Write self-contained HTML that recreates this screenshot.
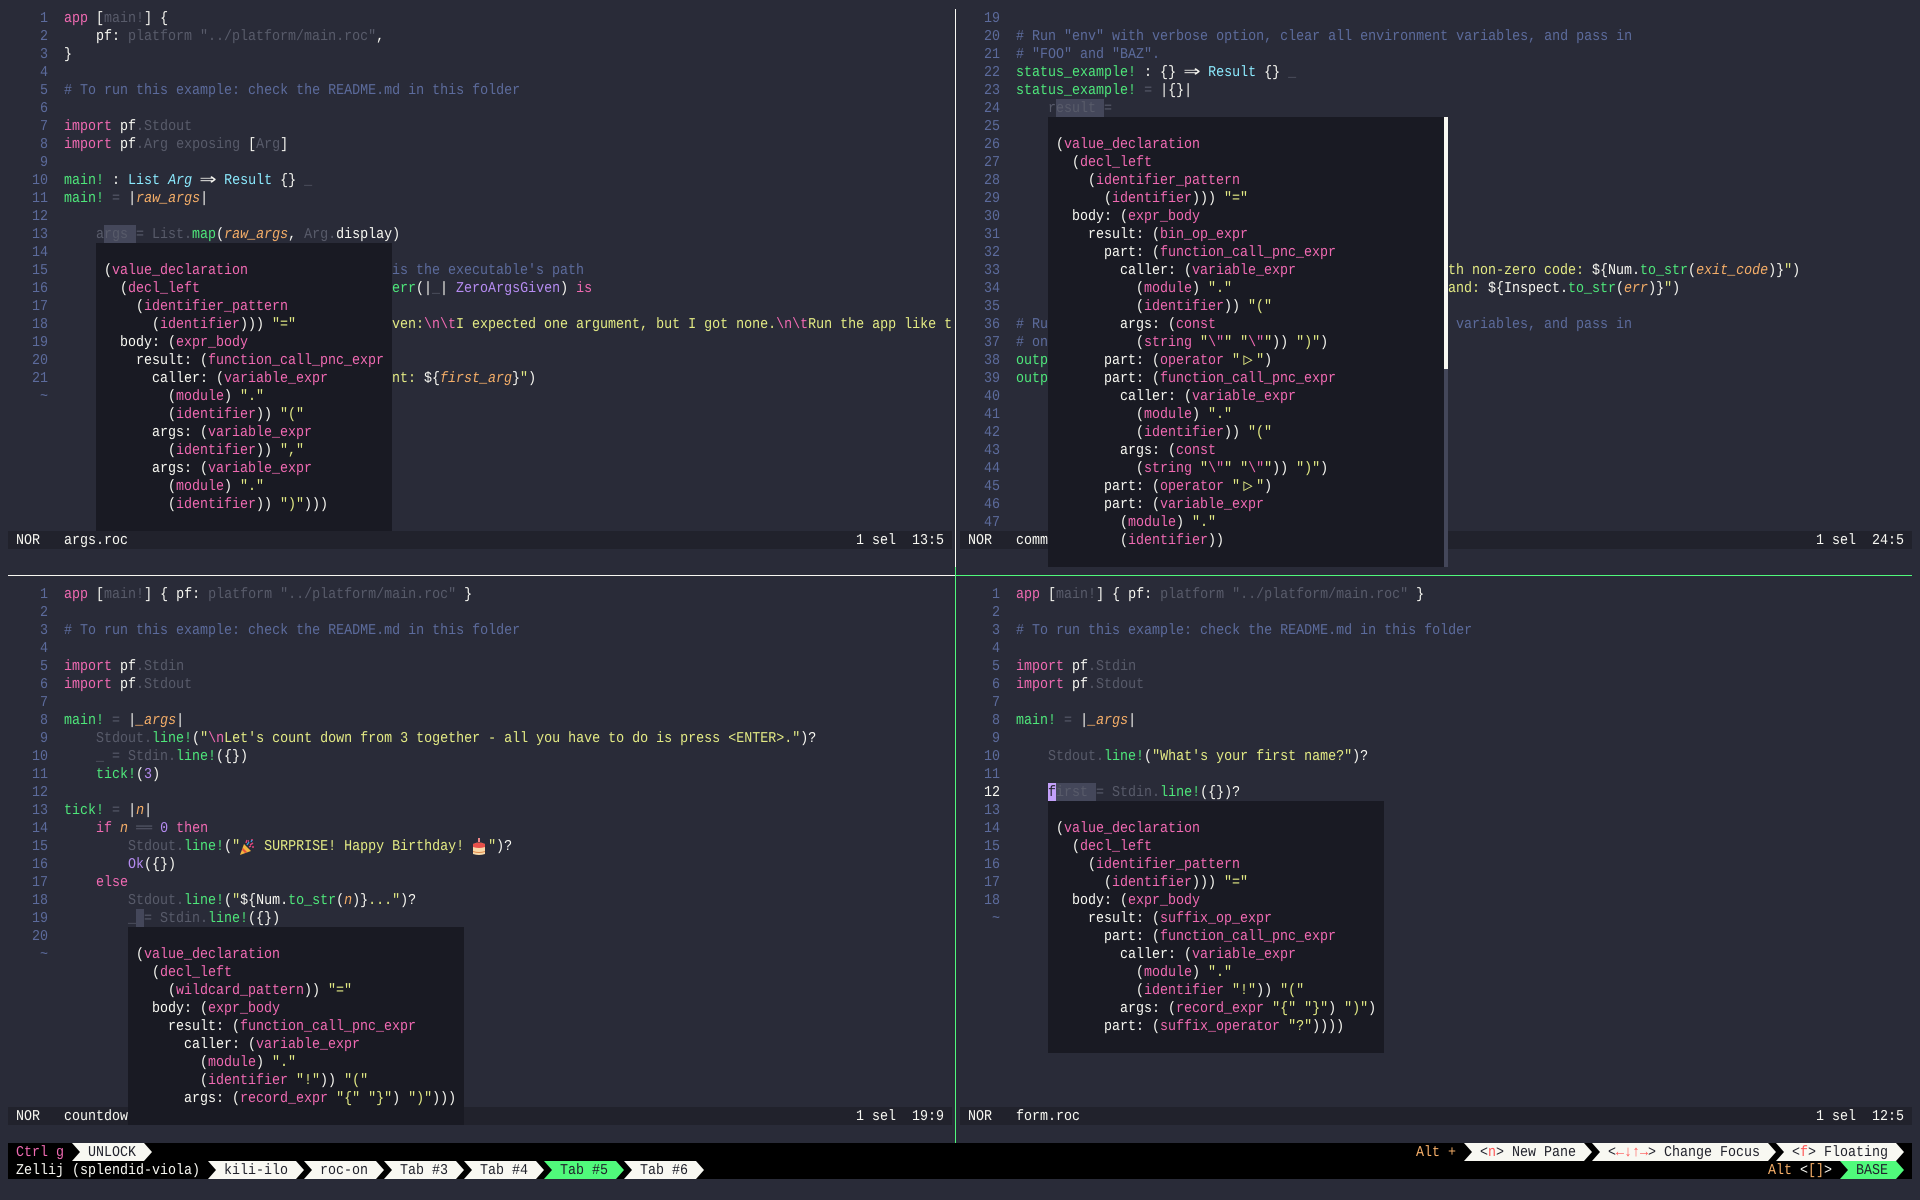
<!DOCTYPE html>
<html lang="en"><head><meta charset="utf-8"><title>Zellij</title>
<style>
html,body{margin:0;padding:0;width:1920px;height:1200px;overflow:hidden;background:#292b38}
.t{position:absolute;margin:1px 0 0;font:15px/18px "Liberation Mono","DejaVu Sans Mono",monospace;color:#f8f8f2;white-space:pre;transform:scaleX(.8889);transform-origin:0 0;text-rendering:geometricPrecision;font-kerning:none;font-variant-ligatures:none}
.r{position:absolute}
b{font-weight:400}
.p{color:#f06ab2}.g{color:#4ee67a}.c{color:#8be9fd}.o{color:#f5ae68;font-style:italic}.n{color:#f5ae68}.v{color:#b68cf2}.y{color:#e3ea84}.d{color:#585b6a}.m{color:#5c6b9c}.l{color:#5c6b9c}.h{color:#21222c}.e{color:#ff5555}.q{color:#ffffff}
.ar{display:inline-block;width:18px;text-align:center;transform:scale(2.1,1.35)}
.tr{display:inline-block;width:18px;text-align:center;transform:scale(1.15,1.1)}
.pop{position:absolute;background:#191a23}
.sb{position:absolute;background:#21222c;height:18px}
.chip{position:absolute;height:18px;background:#f8f8f2;clip-path:polygon(0 0,calc(100% - 8px) 0,100% 50%,calc(100% - 8px) 100%,0 100%,8px 50%)}
</style></head><body>

<!-- status bars -->
<div class="sb" style="left:8px;top:531px;width:944px"></div>
<div class="sb" style="left:960px;top:531px;width:952px"></div>
<div class="sb" style="left:8px;top:1107px;width:944px"></div>
<div class="sb" style="left:960px;top:1107px;width:952px"></div>

<!-- selections -->
<div class="r" style="left:104px;top:225px;width:32px;height:18px;background:#44475a"></div>
<div class="r" style="left:1056px;top:99px;width:48px;height:18px;background:#44475a"></div>
<div class="r" style="left:136px;top:909px;width:8px;height:18px;background:#44475a"></div>
<div class="r" style="left:1056px;top:783px;width:40px;height:18px;background:#44475a"></div>
<div class="r" style="left:1048px;top:783px;width:8px;height:18px;background:#c3a0fa"></div>

<!-- pane borders -->
<div class="r" style="left:955px;top:9px;width:1px;height:558px;background:#f8f8f2"></div>
<div class="r" style="left:955px;top:567px;width:1px;height:576px;background:#50fa7b"></div>
<div class="r" style="left:8px;top:575px;width:947px;height:1px;background:#f8f8f2"></div>
<div class="r" style="left:955px;top:575px;width:957px;height:1px;background:#50fa7b"></div>

<!-- top left -->
<pre class="t" style="left:8px;top:9px"><b class=l>    1</b>  <b class=p>app</b> [<b class=d>main!</b>] {
<b class=l>    2</b>      pf: <b class=d>platform "../platform/main.roc"</b>,
<b class=l>    3</b>  }
<b class=l>    4</b>
<b class=l>    5</b>  <b class=m># To run this example: check the README.md in this folder</b>
<b class=l>    6</b>
<b class=l>    7</b>  <b class=p>import</b> pf<b class=d>.Stdout</b>
<b class=l>    8</b>  <b class=p>import</b> pf<b class=d>.Arg exposing</b> [<b class=d>Arg</b>]
<b class=l>    9</b>
<b class=l>   10</b>  <b class=g>main!</b> : <b class=c>List</b> <b class=c style="font-style:italic">Arg</b> <span class=ar>⇒</span> <b class=c>Result</b> {} <b class=d>_</b>
<b class=l>   11</b>  <b class=g>main!</b> <b class=d>=</b> |<b class=o>raw_args</b>|
<b class=l>   12</b>
<b class=l>   13</b>      <b class=d>args = List.</b><b class=g>map</b>(<b class=o>raw_args</b>, <b class=d>Arg.</b>display)
<b class=l>   14</b>
<b class=l>   15</b>
<b class=l>   16</b>
<b class=l>   17</b>
<b class=l>   18</b>
<b class=l>   19</b>
<b class=l>   20</b>
<b class=l>   21</b>
<b class=l>    ~</b></pre>
<pre class="t m" style="left:392px;top:261px">is the executable's path</pre>
<pre class="t" style="left:392px;top:279px"><b class=g>err</b>(|<b class=d>_</b>| <b class=v>ZeroArgsGiven</b>) <b class=p>is</b></pre>
<pre class="t y" style="left:392px;top:315px">ven:<b class=p>\n\t</b>I expected one argument, but I got none.<b class=p>\n\t</b>Run the app like t</pre>
<pre class="t y" style="left:392px;top:369px">nt: <b style="color:#f8f8f2">${</b><b class=o>first_arg</b><b style="color:#f8f8f2">}</b>"<b style="color:#f8f8f2">)</b></pre>
<pre class="t" style="left:16px;top:531px">NOR   args.roc</pre>
<pre class="t" style="left:856px;top:531px">1 sel  13:5</pre>

<div class="pop" style="left:96px;top:243px;width:296px;height:288px"></div>
<pre class="t" style="left:104px;top:261px">(<b class=p>value_declaration</b>
  (<b class=p>decl_left</b>
    (<b class=p>identifier_pattern</b>
      (<b class=p>identifier</b>))) <b class=y>"="</b>
  body: (<b class=p>expr_body</b>
    result: (<b class=p>function_call_pnc_expr</b>
      caller: (<b class=p>variable_expr</b>
        (<b class=p>module</b>) <b class=y>"."</b>
        (<b class=p>identifier</b>)) <b class=y>"("</b>
      args: (<b class=p>variable_expr</b>
        (<b class=p>identifier</b>)) <b class=y>","</b>
      args: (<b class=p>variable_expr</b>
        (<b class=p>module</b>) <b class=y>"."</b>
        (<b class=p>identifier</b>)) <b class=y>")"</b>)))</pre>

<!-- top right -->
<pre class="t" style="left:960px;top:9px"><b class=l>   19</b>
<b class=l>   20</b>  <b class=m># Run "env" with verbose option, clear all environment variables, and pass in</b>
<b class=l>   21</b>  <b class=m># "FOO" and "BAZ".</b>
<b class=l>   22</b>  <b class=g>status_example!</b> : {} <span class=ar>⇒</span> <b class=c>Result</b> {} <b class=d>_</b>
<b class=l>   23</b>  <b class=g>status_example!</b> <b class=d>=</b> |{}|
<b class=l>   24</b>      <b class=d>result =</b>
<b class=l>   25</b>
<b class=l>   26</b>
<b class=l>   27</b>
<b class=l>   28</b>
<b class=l>   29</b>
<b class=l>   30</b>
<b class=l>   31</b>
<b class=l>   32</b>
<b class=l>   33</b>
<b class=l>   34</b>
<b class=l>   35</b>
<b class=l>   36</b>  <b class=m># Ru</b>
<b class=l>   37</b>  <b class=m># on</b>
<b class=l>   38</b>  <b class=g>outp</b>
<b class=l>   39</b>  <b class=g>outp</b>
<b class=l>   40</b>
<b class=l>   41</b>
<b class=l>   42</b>
<b class=l>   43</b>
<b class=l>   44</b>
<b class=l>   45</b>
<b class=l>   46</b>
<b class=l>   47</b></pre>
<pre class="t" style="left:1448px;top:261px"><b class=y>th non-zero code: </b>${Num.<b class=g>to_str</b>(<b class=o>exit_code</b>)}<b class=y>"</b>)</pre>
<pre class="t" style="left:1448px;top:279px"><b class=y>and: </b>${Inspect.<b class=g>to_str</b>(<b class=o>err</b>)}<b class=y>"</b>)</pre>
<pre class="t m" style="left:1456px;top:315px">variables, and pass in</pre>
<pre class="t" style="left:968px;top:531px">NOR   comm</pre>
<pre class="t" style="left:1816px;top:531px">1 sel  24:5</pre>

<div class="pop" style="left:1048px;top:117px;width:396px;height:450px"></div>
<div class="r" style="left:1444px;top:117px;width:4px;height:252px;background:#f8f8f2"></div>
<div class="r" style="left:1444px;top:369px;width:4px;height:198px;background:#44475a"></div>
<pre class="t" style="left:1056px;top:135px">(<b class=p>value_declaration</b>
  (<b class=p>decl_left</b>
    (<b class=p>identifier_pattern</b>
      (<b class=p>identifier</b>))) <b class=y>"="</b>
  body: (<b class=p>expr_body</b>
    result: (<b class=p>bin_op_expr</b>
      part: (<b class=p>function_call_pnc_expr</b>
        caller: (<b class=p>variable_expr</b>
          (<b class=p>module</b>) <b class=y>"."</b>
          (<b class=p>identifier</b>)) <b class=y>"("</b>
        args: (<b class=p>const</b>
          (<b class=p>string</b> <b class=y>"</b><b class=p>\"</b><b class=y>"</b> <b class=y>"</b><b class=p>\"</b><b class=y>"</b>)) <b class=y>")"</b>)
      part: (<b class=p>operator</b> <b class=y>"<span class=tr>▷</span>"</b>)
      part: (<b class=p>function_call_pnc_expr</b>
        caller: (<b class=p>variable_expr</b>
          (<b class=p>module</b>) <b class=y>"."</b>
          (<b class=p>identifier</b>)) <b class=y>"("</b>
        args: (<b class=p>const</b>
          (<b class=p>string</b> <b class=y>"</b><b class=p>\"</b><b class=y>"</b> <b class=y>"</b><b class=p>\"</b><b class=y>"</b>)) <b class=y>")"</b>)
      part: (<b class=p>operator</b> <b class=y>"<span class=tr>▷</span>"</b>)
      part: (<b class=p>variable_expr</b>
        (<b class=p>module</b>) <b class=y>"."</b>
        (<b class=p>identifier</b>))</pre>

<!-- bottom left -->
<pre class="t" style="left:8px;top:585px"><b class=l>    1</b>  <b class=p>app</b> [<b class=d>main!</b>] { pf: <b class=d>platform "../platform/main.roc"</b> }
<b class=l>    2</b>
<b class=l>    3</b>  <b class=m># To run this example: check the README.md in this folder</b>
<b class=l>    4</b>
<b class=l>    5</b>  <b class=p>import</b> pf<b class=d>.Stdin</b>
<b class=l>    6</b>  <b class=p>import</b> pf<b class=d>.Stdout</b>
<b class=l>    7</b>
<b class=l>    8</b>  <b class=g>main!</b> <b class=d>=</b> |<b class=o>_args</b>|
<b class=l>    9</b>      <b class=d>Stdout.</b><b class=g>line!</b>(<b class=y>"</b><b class=p>\n</b><b class=y>Let's count down from 3 together - all you have to do is press &lt;ENTER&gt;."</b>)?
<b class=l>   10</b>      <b class=d>_ = Stdin.</b><b class=g>line!</b>({})
<b class=l>   11</b>      <b class=g>tick!</b>(<b class=v>3</b>)
<b class=l>   12</b>
<b class=l>   13</b>  <b class=g>tick!</b> <b class=d>=</b> |<b class=o>n</b>|
<b class=l>   14</b>      <b class=p>if</b> <b class=o>n</b> <b class=d>══</b> <b class=v>0</b> <b class=p>then</b>
<b class=l>   15</b>          <b class=d>Stdout.</b><b class=g>line!</b>(<b class=y>"   SURPRISE! Happy Birthday!   "</b>)?
<b class=l>   16</b>          <b class=v>Ok</b>({})
<b class=l>   17</b>      <b class=p>else</b>
<b class=l>   18</b>          <b class=d>Stdout.</b><b class=g>line!</b>(<b class=y>"</b>${Num.<b class=g>to_str</b>(<b class=o>n</b>)}<b class=y>..."</b>)?
<b class=l>   19</b>          <b class=d>_ = Stdin.</b><b class=g>line!</b>({})
<b class=l>   20</b>
<b class=l>    ~</b></pre>
<svg class="r" style="left:239px;top:838px" width="16" height="18" viewBox="0 0 16 18" aria-hidden="true"><path d="M1 17 5 6l7 7z" fill="#f4b63f"/><path d="M3 12l3 3 2-1-4-4z" fill="#e8553c"/><path d="M7 5l1-3M11 7l3-2M9 3h1M12 2h2M13 9h2M10 9l2-1" stroke="#e0457b" stroke-width="1.4" fill="none"/><path d="M8 7l2-3M12 4l1-2" stroke="#39a0e0" stroke-width="1.2" fill="none"/></svg>
<svg class="r" style="left:471px;top:838px" width="16" height="18" viewBox="0 0 16 18" aria-hidden="true"><rect x="7" y="0" width="2" height="4" fill="#e88"/><path d="M2 6q6-3 12 0v10q-6 2-12 0z" fill="#f8d9a8"/><path d="M2 6q6-3 12 0v3q-6 2-12 0z" fill="#e8504a"/><path d="M2 13q6 2 12 0v1q-6 2-12 0z" fill="#e0884a"/></svg>
<pre class="t" style="left:16px;top:1107px">NOR   countdow</pre>
<pre class="t" style="left:856px;top:1107px">1 sel  19:9</pre>

<div class="pop" style="left:128px;top:927px;width:336px;height:198px"></div>
<pre class="t" style="left:136px;top:945px">(<b class=p>value_declaration</b>
  (<b class=p>decl_left</b>
    (<b class=p>wildcard_pattern</b>)) <b class=y>"="</b>
  body: (<b class=p>expr_body</b>
    result: (<b class=p>function_call_pnc_expr</b>
      caller: (<b class=p>variable_expr</b>
        (<b class=p>module</b>) <b class=y>"."</b>
        (<b class=p>identifier</b> <b class=y>"!"</b>)) <b class=y>"("</b>
      args: (<b class=p>record_expr</b> <b class=y>"{"</b> <b class=y>"}"</b>) <b class=y>")"</b>)))</pre>

<!-- bottom right -->
<pre class="t" style="left:960px;top:585px"><b class=l>    1</b>  <b class=p>app</b> [<b class=d>main!</b>] { pf: <b class=d>platform "../platform/main.roc"</b> }
<b class=l>    2</b>
<b class=l>    3</b>  <b class=m># To run this example: check the README.md in this folder</b>
<b class=l>    4</b>
<b class=l>    5</b>  <b class=p>import</b> pf<b class=d>.Stdin</b>
<b class=l>    6</b>  <b class=p>import</b> pf<b class=d>.Stdout</b>
<b class=l>    7</b>
<b class=l>    8</b>  <b class=g>main!</b> <b class=d>=</b> |<b class=o>_args</b>|
<b class=l>    9</b>
<b class=l>   10</b>      <b class=d>Stdout.</b><b class=g>line!</b>(<b class=y>"What's your first name?"</b>)?
<b class=l>   11</b>
<b>   12</b>      <b class=h>f</b><b class=d>irst = Stdin.</b><b class=g>line!</b>({})?
<b class=l>   13</b>
<b class=l>   14</b>
<b class=l>   15</b>
<b class=l>   16</b>
<b class=l>   17</b>
<b class=l>   18</b>
<b class=l>    ~</b></pre>
<pre class="t" style="left:968px;top:1107px">NOR   form.roc</pre>
<pre class="t" style="left:1816px;top:1107px">1 sel  12:5</pre>

<div class="pop" style="left:1048px;top:801px;width:336px;height:252px"></div>
<pre class="t" style="left:1056px;top:819px">(<b class=p>value_declaration</b>
  (<b class=p>decl_left</b>
    (<b class=p>identifier_pattern</b>
      (<b class=p>identifier</b>))) <b class=y>"="</b>
  body: (<b class=p>expr_body</b>
    result: (<b class=p>suffix_op_expr</b>
      part: (<b class=p>function_call_pnc_expr</b>
        caller: (<b class=p>variable_expr</b>
          (<b class=p>module</b>) <b class=y>"."</b>
          (<b class=p>identifier</b> <b class=y>"!"</b>)) <b class=y>"("</b>
        args: (<b class=p>record_expr</b> <b class=y>"{"</b> <b class=y>"}"</b>) <b class=y>")"</b>)
      part: (<b class=p>suffix_operator</b> <b class=y>"?"</b>))))</pre>

<!-- zellij bar -->
<div class="r" style="left:8px;top:1143px;width:1904px;height:36px;background:#000"></div>
<div class="chip" style="left:72px;top:1143px;width:80px"></div>
<div class="chip" style="left:208px;top:1161px;width:96px"></div>
<div class="chip" style="left:304px;top:1161px;width:80px"></div>
<div class="chip" style="left:384px;top:1161px;width:80px"></div>
<div class="chip" style="left:464px;top:1161px;width:80px"></div>
<div class="chip" style="left:544px;top:1161px;width:80px;background:#50fa7b"></div>
<div class="chip" style="left:624px;top:1161px;width:80px"></div>
<div class="chip" style="left:1464px;top:1143px;width:128px"></div>
<div class="chip" style="left:1592px;top:1143px;width:184px"></div>
<div class="chip" style="left:1776px;top:1143px;width:128px"></div>
<div class="chip" style="left:1840px;top:1161px;width:64px;background:#50fa7b"></div>

<pre class="t p" style="left:16px;top:1143px">Ctrl g</pre>
<pre class="t h" style="left:88px;top:1143px">UNLOCK</pre>
<pre class="t" style="left:16px;top:1161px">Zellij (splendid-viola)</pre>
<pre class="t h" style="left:224px;top:1161px">kili-ilo</pre>
<pre class="t h" style="left:320px;top:1161px">roc-on</pre>
<pre class="t h" style="left:400px;top:1161px">Tab #3</pre>
<pre class="t h" style="left:480px;top:1161px">Tab #4</pre>
<pre class="t h" style="left:560px;top:1161px">Tab #5</pre>
<pre class="t h" style="left:640px;top:1161px">Tab #6</pre>
<pre class="t n" style="left:1416px;top:1143px">Alt +</pre>
<pre class="t h" style="left:1480px;top:1143px">&lt;<b class=e>n</b>&gt; New Pane</pre>
<pre class="t h" style="left:1608px;top:1143px">&lt;<b class=e>←↓↑→</b>&gt; Change Focus</pre>
<pre class="t h" style="left:1792px;top:1143px">&lt;<b class=e>f</b>&gt; Floating</pre>
<pre class="t" style="left:1768px;top:1161px"><b class=n>Alt</b> &lt;<b class=n>[]</b>&gt;</pre>
<pre class="t h" style="left:1856px;top:1161px">BASE</pre>

</body></html>
